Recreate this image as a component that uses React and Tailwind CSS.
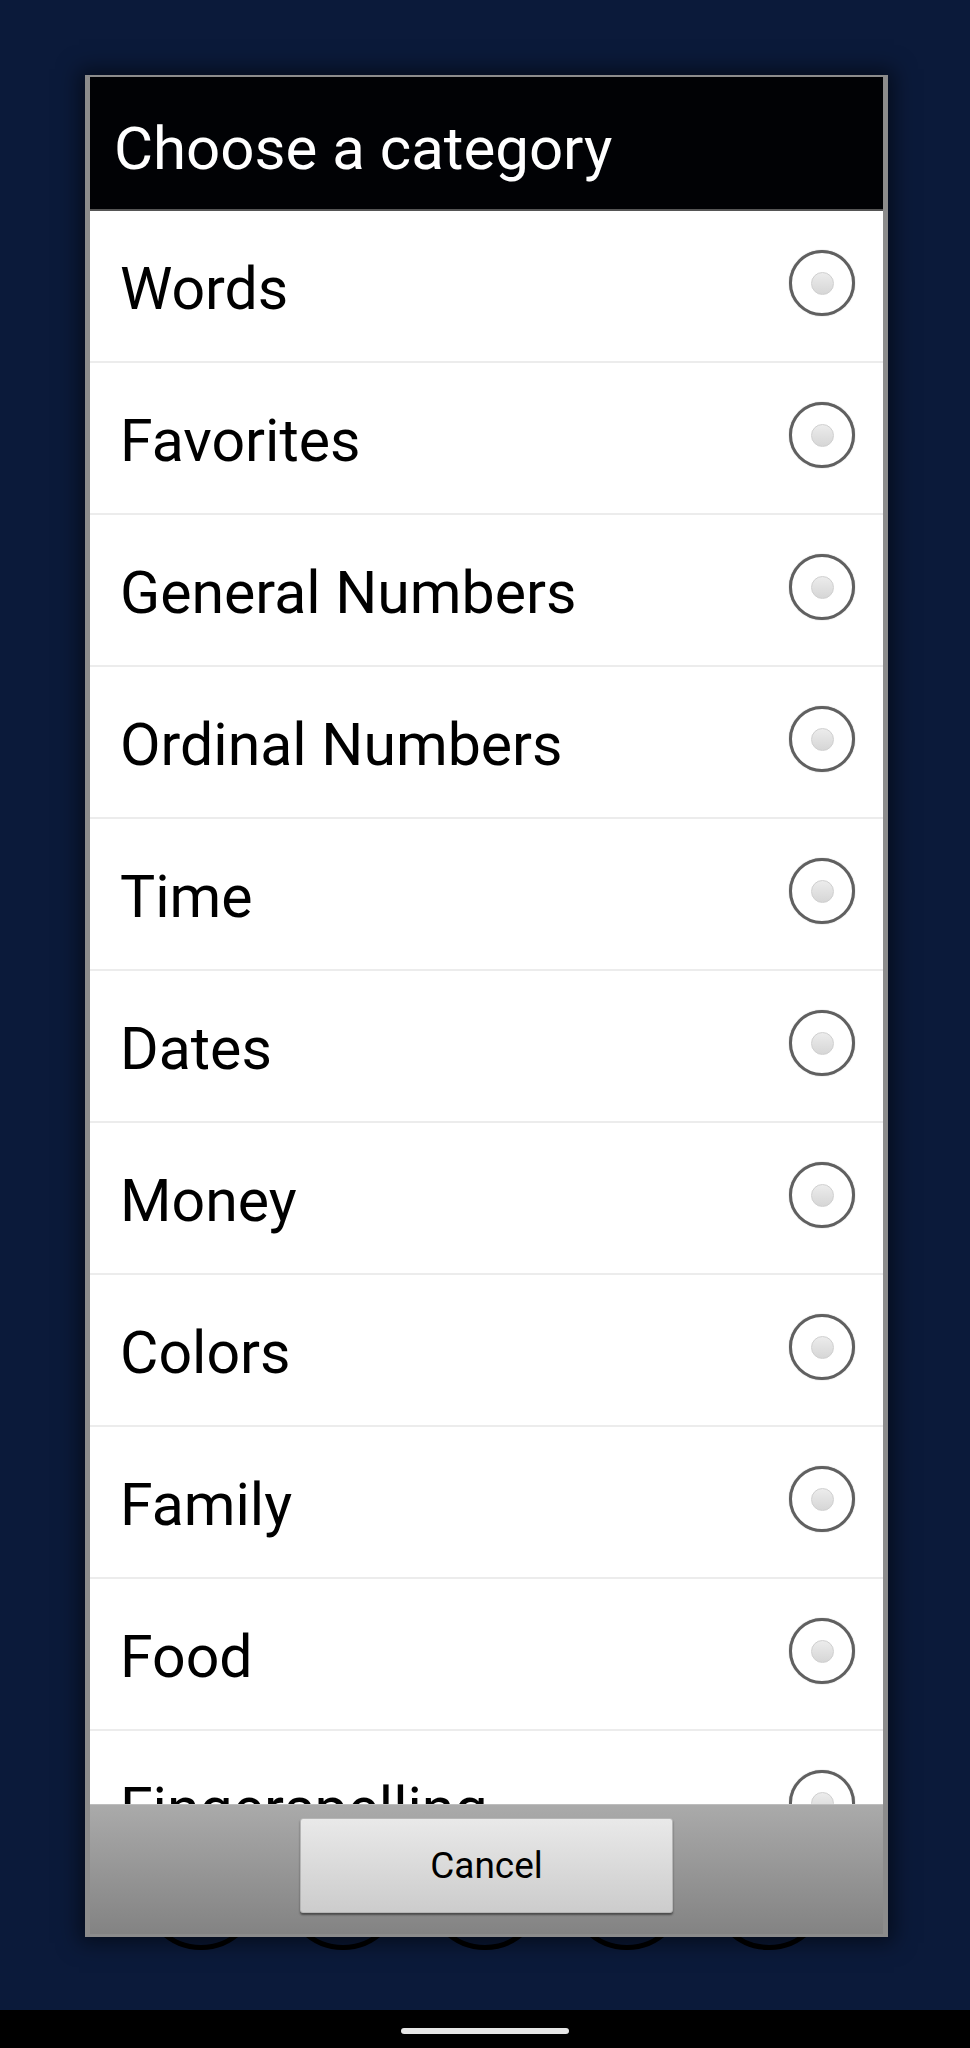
import React from "react";

const categorias = [
  "Words",
  "Favorites",
  "General Numbers",
  "Ordinal Numbers",
  "Time",
  "Dates",
  "Money",
  "Colors",
  "Family",
  "Food",
  "Fingerspelling",
];

function Radio() {
  return (
    <div className="w-[66px] h-[66px] rounded-full border-[3px] border-[#606060] bg-white flex items-center justify-center shrink-0 mb-[6px] shadow-[0_0_1px_rgba(0,0,0,0.5)]">
      <div className="w-[23px] h-[23px] rounded-full bg-gradient-to-b from-[#ececec] to-[#d6d6d6] border border-[#cfcfcf]" />
    </div>
  );
}

export default function App() {
  return (
    <div
      className="relative w-[970px] h-[2048px] bg-[#0b1a3a] flex flex-col overflow-hidden"
      style={{ fontFamily: "Roboto, 'Liberation Sans', sans-serif" }}
    >
      {/* fondo con botones redondos */}
      <div className="flex-1 flex flex-col justify-end pb-[60px]">
        <div className="flex justify-center gap-[24px]">
          {[0, 1, 2, 3, 4].map(i => (
            <div
              key={i}
              className="w-[118px] h-[118px] rounded-full border-[5px] border-black bg-[#0a1733]"
            />
          ))}
        </div>
      </div>

      {/* barra de navegación */}
      <div className="h-[38px] bg-black flex justify-center pt-[18px]">
        <div className="w-[168px] h-[6px] rounded-full bg-[#e6e6e6]" />
      </div>

      {/* diálogo */}
      <div className="absolute left-[85px] top-[75px] w-[803px] h-[1862px] flex flex-col border-x-[5px] border-t-[2px] border-b-[3px] border-[#8c8c8c] shadow-[0_0_20px_6px_rgba(0,0,0,0.5)]">
        <div className="h-[134px] bg-[#010205] flex items-center pl-[24px] border-b-[2px] border-[#555]">
          <h2 className="text-[60px] text-white leading-none pt-[12px]">Choose a category</h2>
        </div>

        <div className="flex-1 bg-white overflow-hidden">
          {categorias.map(c => (
            <div
              key={c}
              className="h-[152px] flex items-center justify-between pl-[30px] pr-[28px] border-b-[2px] border-[#ececec]"
            >
              <span className="text-[59px] text-black leading-none pt-[4px]">{c}</span>
              <Radio />
            </div>
          ))}
        </div>

        <div className="h-[130px] bg-gradient-to-b from-[#aaaaaa] to-[#838383] border-t border-[#bdbdbd] flex justify-center pt-[13px]">
          <button className="w-[373px] h-[95px] rounded-[3px] bg-gradient-to-b from-[#e9e9e9] to-[#cccccc] border border-[#b5b5b5] shadow-[0_2px_2px_rgba(0,0,0,0.45)] text-[37px] text-black">
            Cancel
          </button>
        </div>
      </div>
    </div>
  );
}
